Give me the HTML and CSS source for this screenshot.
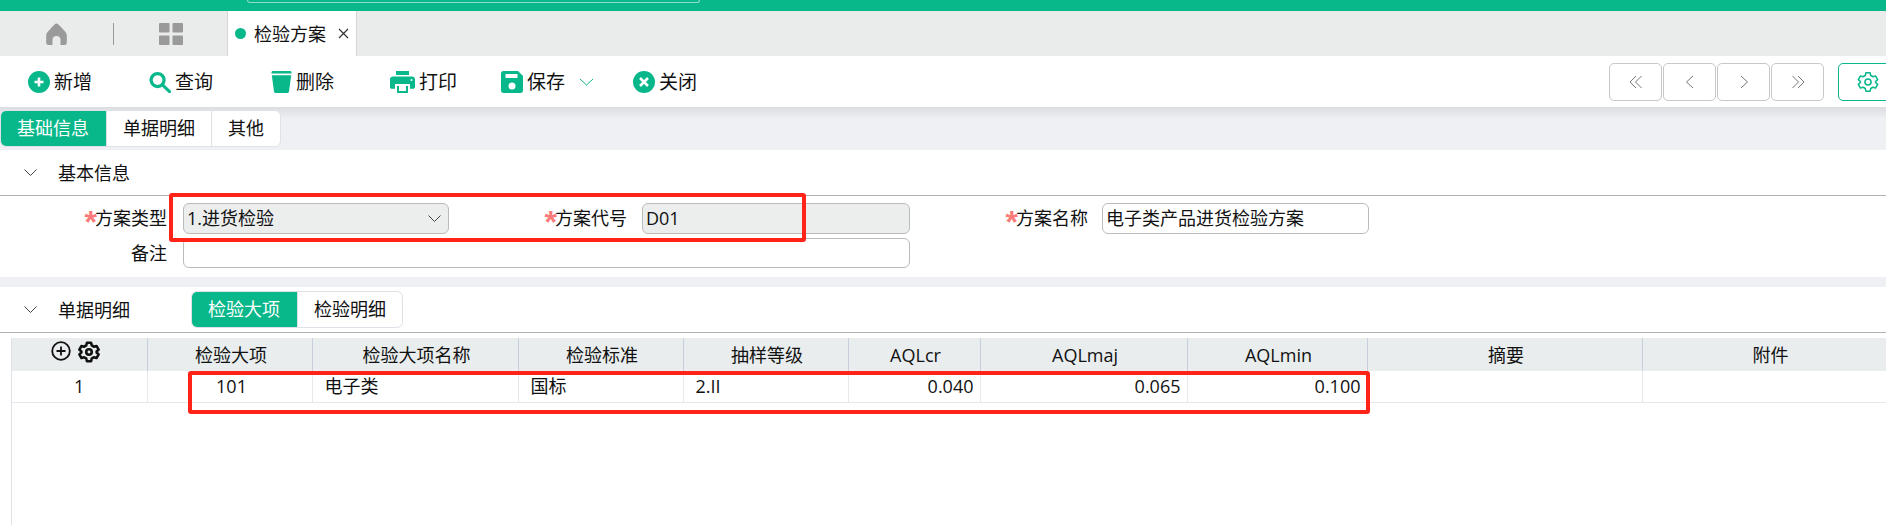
FILE: index.html
```html
<!DOCTYPE html>
<html lang="zh-CN">
<head>
  <meta charset="UTF-8">
  <title>检验方案</title>
  <link rel="stylesheet" href="styles.css">
</head>
<body>
  <div class="page">
    <div class="top-bar"><div class="top-search"></div></div>

    <div class="tab-bar">
      <div class="tab-icon">
        <svg width="21" height="22" viewBox="0 0 21 22"><path fill="#9a9a9a" d="M10.500 0.500C12 0.500 13 2 14.500 3.500L19 8.500C20.300 10 20.800 11 20.800 12.500V19.500C20.800 21 20 22 18.500 22H14.500V16.500C14.500 14.500 12.800 13 10.500 13C8.200 13 6.500 14.500 6.500 16.500V22H2.500C1 22 0.200 21 0.200 19.500V12.500C0.200 11 0.700 10 2 8.500L6.500 3.500C8 2 9 0.500 10.500 0.500Z"/></svg>
      </div>
      <div class="tab-sep"></div>
      <div class="tab-icon">
        <svg width="24" height="22" viewBox="0 0 24 22"><rect width="10.500" height="9.500" rx="1" fill="#9a9a9a"/><rect x="13.500" width="10.500" height="9.500" rx="1" fill="#9a9a9a"/><rect y="12.500" width="10.500" height="9.500" rx="1" fill="#9a9a9a"/><rect x="13.500" y="12.500" width="10.500" height="9.500" rx="1" fill="#9a9a9a"/></svg>
      </div>
      <div class="tab">
        <span class="tab-dot"></span>
        <span class="tab-title">检验方案</span>
        <svg class="tab-close" width="11" height="11" viewBox="0 0 11 11"><path d="M1 1L10 10M10 1L1 10" stroke="#333" stroke-width="1.200" fill="none"/></svg>
      </div>
    </div>

    <div class="toolbar">
      <div class="tools">
        <div class="tool">
          <svg width="22" height="22" viewBox="0 0 22 22"><circle cx="11" cy="11" r="11" fill="#08b78a"/><path d="M11 6.500V15.500M6.500 11H15.500" stroke="#fff" stroke-width="2.600"/></svg>
          <span>新增</span>
        </div>
        <div class="tool">
          <svg width="22" height="22" viewBox="0 0 23 22"><circle cx="9" cy="9" r="6.800" fill="none" stroke="#08b78a" stroke-width="3.400"/><path d="M13.800 13.800L21.500 21" stroke="#08b78a" stroke-width="3.200" stroke-linecap="round"/></svg>
          <span>查询</span>
        </div>
        <div class="tool">
          <svg width="21" height="22" viewBox="0 0 21 22"><path fill="#08b78a" d="M2 0H19C19.800 0 20.500 .6 20.500 1.300V2.500H.5V1.300C.5 .6 1.200 0 2 0ZM0.800 4.200H20.200L18 20.500C17.900 21.400 17.200 22 16.300 22H4.700C3.800 22 3.100 21.400 3 20.500Z"/></svg>
          <span>删除</span>
        </div>
        <div class="tool">
          <svg width="25" height="22" viewBox="0 0 25 22"><path fill="#08b78a" d="M6 0H19V4H6ZM3 5.500H22C23.700 5.500 25 6.800 25 8.500V16C25 17 24.200 17.800 23.200 17.800H20V13H5V17.800H1.800C.8 17.800 0 17 0 16V8.500C0 6.800 1.300 5.500 3 5.500ZM7 15H18V22H7Z"/><rect x="9" y="15" width="7" height="5" fill="#fff"/><circle cx="21.500" cy="9" r="1" fill="#fff"/></svg>
          <span>打印</span>
        </div>
        <div class="tool">
          <svg width="22" height="22" viewBox="0 0 22 22"><path fill="#08b78a" d="M2.500 0H17L22 5V19.500C22 20.900 20.900 22 19.500 22H2.500C1.100 22 0 20.900 0 19.500V2.500C0 1.100 1.100 0 2.500 0Z"/><rect x="4.500" y="3" width="12" height="4" fill="#fff"/><circle cx="11" cy="15" r="3.500" fill="#fff"/></svg>
          <span>保存</span>
          <svg class="tool-arrow" width="15" height="8" viewBox="0 0 15 8"><path d="M1 1L7.500 7L14 1" fill="none" stroke="#08b78a" stroke-width="1"/></svg>
        </div>
        <div class="tool">
          <svg width="22" height="22" viewBox="0 0 22 22"><circle cx="11" cy="11" r="11" fill="#08b78a"/><path d="M7 7L15 15M15 7L7 15" stroke="#fff" stroke-width="2.600"/></svg>
          <span>关闭</span>
        </div>
      </div>
      <div class="pager">
        <div class="pager-btn"><svg width="14" height="14" viewBox="0 0 14 14"><path d="M7 1L1 7L7 13M12.500 1L6.500 7L12.500 13" fill="none" stroke="#777" stroke-width="1"/></svg></div>
        <div class="pager-btn"><svg width="14" height="14" viewBox="0 0 14 14"><path d="M10 1L3.500 7L10 13" fill="none" stroke="#777" stroke-width="1"/></svg></div>
        <div class="pager-btn"><svg width="14" height="14" viewBox="0 0 14 14"><path d="M4 1L10.500 7L4 13" fill="none" stroke="#777" stroke-width="1"/></svg></div>
        <div class="pager-btn"><svg width="14" height="14" viewBox="0 0 14 14"><path d="M1.500 1L7.500 7L1.500 13M7 1L13 7L7 13" fill="none" stroke="#777" stroke-width="1"/></svg></div>
      </div>
      <div class="setting-btn">
        <svg width="22" height="22" viewBox="0 0 24 24" fill="none" stroke="#08b78a" stroke-width="1.700" stroke-linejoin="round"><path d="M9.700 2H14.300L15 5A7.500 7.500 0 0 1 17.300 6.300L20.200 5.400L22.500 9.400L20.300 11.500A7.500 7.500 0 0 1 20.300 12.500L22.500 14.600L20.200 18.600L17.300 17.700A7.500 7.500 0 0 1 15 19L14.300 22H9.700L9 19A7.500 7.500 0 0 1 6.700 17.700L3.800 18.600L1.500 14.600L3.700 12.500A7.500 7.500 0 0 1 3.700 11.500L1.500 9.400L3.800 5.400L6.700 6.300A7.500 7.500 0 0 1 9 5Z"/><circle cx="12" cy="12" r="3.300"/></svg>
      </div>
    </div>

    <div class="tabs-band">
      <div class="seg">
        <div class="seg-item active">基础信息</div>
        <div class="seg-item">单据明细</div>
        <div class="seg-item">其他</div>
      </div>
    </div>

    <div class="section">
      <div class="section-head">
        <svg class="fold" width="13" height="7" viewBox="0 0 13 7"><path d="M.5 .5L6.500 6.500L12.500 .5" fill="none" stroke="#444" stroke-width="1"/></svg>
        <span class="section-title">基本信息</span>
      </div>
      <div class="form">
        <div class="label"><i>*</i>方案类型</div>
        <div class="field select gray">
          <span>1.进货检验</span>
          <svg width="13" height="7" viewBox="0 0 13 7"><path d="M.5 .5L6.500 6.500L12.500 .5" fill="none" stroke="#444" stroke-width="1"/></svg>
        </div>
        <div class="label label-code"><i>*</i>方案代号</div>
        <div class="field gray">D01</div>
        <div class="label label-name"><i>*</i>方案名称</div>
        <div class="field">电子类产品进货检验方案</div>
        <div class="label">备注</div>
        <div class="field wide"></div>
      </div>
    </div>

    <div class="section lower">
      <div class="section-head">
        <svg class="fold" width="13" height="7" viewBox="0 0 13 7"><path d="M.5 .5L6.500 6.500L12.500 .5" fill="none" stroke="#444" stroke-width="1"/></svg>
        <span class="section-title">单据明细</span>
        <div class="seg seg-inner">
          <div class="seg-item active">检验大项</div>
          <div class="seg-item">检验明细</div>
        </div>
      </div>
      <div class="grid-wrap">
        <table class="grid">
          <colgroup>
            <col class="c0"><col class="c1"><col class="c2"><col class="c3"><col class="c4">
            <col class="c5"><col class="c6"><col class="c7"><col class="c8"><col class="c9">
          </colgroup>
          <thead>
            <tr>
              <th class="ops">
                <div class="ops-icons">
                  <svg width="20" height="20" viewBox="0 0 20 20"><circle cx="10" cy="10" r="8.800" fill="none" stroke="#111" stroke-width="1.800"/><path d="M10 5.500V14.500M5.500 10H14.500" stroke="#111" stroke-width="1.800"/></svg>
                  <svg width="22" height="22" viewBox="0 0 24 24" fill="none" stroke="#111" stroke-width="2.800" stroke-linejoin="round"><path d="M9.700 2H14.300L15 5A7.500 7.500 0 0 1 17.300 6.300L20.200 5.400L22.500 9.400L20.300 11.500A7.500 7.500 0 0 1 20.300 12.500L22.500 14.600L20.200 18.600L17.300 17.700A7.500 7.500 0 0 1 15 19L14.300 22H9.700L9 19A7.500 7.500 0 0 1 6.700 17.700L3.800 18.600L1.500 14.600L3.700 12.500A7.500 7.500 0 0 1 3.700 11.500L1.500 9.400L3.800 5.400L6.700 6.300A7.500 7.500 0 0 1 9 5Z"/><circle cx="12" cy="12" r="3"/></svg>
                </div>
              </th>
              <th>检验大项</th>
              <th>检验大项名称</th>
              <th>检验标准</th>
              <th>抽样等级</th>
              <th>AQLcr</th>
              <th>AQLmaj</th>
              <th>AQLmin</th>
              <th>摘要</th>
              <th>附件</th>
            </tr>
          </thead>
          <tbody>
            <tr>
              <td class="mid">1</td>
              <td class="mid code">101</td>
              <td>电子类</td>
              <td>国标</td>
              <td>2.II</td>
              <td class="num">0.040</td>
              <td class="num">0.065</td>
              <td class="num">0.100</td>
              <td></td>
              <td></td>
            </tr>
          </tbody>
        </table>
      </div>
    </div>

    <!-- red marks drawn over the screenshot -->
    <div class="mark mark-form"></div>
    <div class="mark mark-row"></div>
  </div>
</body>
</html>
```

FILE: styles.css
```css
html, body {
  margin: 0;
  padding: 0;
  height: 100%;
}
body {
  font-family: "Open Sans", "Noto Sans CJK SC", sans-serif;
  font-size: 18px;
  color: #111;
  background: #fff;
  overflow: hidden;
}
.page {
  position: relative;
  height: 525px;
  overflow: hidden;
}

/* top */
.top-bar {
  height: 11px;
  background: #08b78a;
}
.top-search {
  width: 451px;
  height: 2px;
  margin-left: 247px;
  border: 1px solid #8fdcc6;
  border-top: none;
  border-radius: 0 0 6px 6px;
}
.tab-bar {
  height: 45px;
  background: #e9eceb;
  display: flex;
  align-items: center;
}
.tab-icon {
  width: 113px;
  display: flex;
  justify-content: center;
}
.tab-sep {
  width: 1px;
  height: 22px;
  background: #9a9a9a;
}
.tab {
  width: 130px;
  height: 45px;
  box-sizing: border-box;
  background: #fff;
  border-left: 1px solid #d5d5d5;
  border-right: 1px solid #d5d5d5;
  display: flex;
  align-items: center;
  padding-left: 7px;
}
.tab-dot {
  width: 11px;
  height: 11px;
  border-radius: 50%;
  background: #08b78a;
  margin-right: 8px;
}
.tab-title {
  line-height: 24px;
}
.tab-close {
  margin-left: 12px;
}

/* toolbar */
.toolbar {
  height: 51px;
  background: #fff;
  display: flex;
  align-items: center;
  padding-left: 28px;
  overflow: hidden;
}
.tools {
  display: grid;
  grid-template-columns: 121px 122px 119px 111px 132px auto;
}
.tool {
  display: flex;
  align-items: center;
  gap: 4px;
  font-size: 19px;
  line-height: 24px;
}
.tool-arrow {
  margin-left: 10px;
}
.pager {
  margin-left: auto;
  display: flex;
  gap: 1px;
}
.pager-btn {
  width: 53px;
  height: 38px;
  box-sizing: border-box;
  border: 1px solid #c8c8c8;
  border-radius: 5px;
  display: flex;
  align-items: center;
  justify-content: center;
}
.setting-btn {
  flex: none;
  width: 60px;
  height: 38px;
  margin: 0 -12px 0 14px;
  box-sizing: border-box;
  border: 1px solid #08b78a;
  border-radius: 5px;
  display: flex;
  align-items: center;
  padding-left: 18px;
}

/* segmented tabs */
.tabs-band {
  height: 43px;
  box-sizing: border-box;
  padding-top: 3px;
  background: linear-gradient(#dcdde1, #eff0f4 12px);
}
.seg {
  display: inline-flex;
  height: 37px;
  box-sizing: border-box;
  background: #fff;
  border: 1px solid #dfe1e8;
  border-radius: 6px;
  overflow: hidden;
}
.seg-item {
  padding: 0 16px;
  line-height: 35px;
  border-left: 1px solid #dfe1e8;
}
.seg-item.active {
  margin: -1px 0 -1px -1px;
  padding: 1px 17px;
  border-left: none;
  background: #08b78a;
  color: #fff;
}

/* sections */
.section {
  background: #fff;
}
.section.lower {
  border-top: 10px solid #eff0f4;
}
.section-head {
  height: 46px;
  box-sizing: border-box;
  border-bottom: 1px solid #b2b2b2;
  display: flex;
  align-items: center;
  padding-left: 24px;
}
.fold {
  margin-right: 21px;
}
.section-title {
  line-height: 24px;
}
.seg-inner {
  margin-left: 61px;
}
.form {
  display: grid;
  grid-template-columns: 183px 266px 193px 268px 192px 267px;
  row-gap: 4px;
  padding: 7px 0 9px;
}
.label {
  text-align: right;
  padding-right: 16px;
  line-height: 31px;
  height: 30px;
}
.label-code {
  padding-right: 15px;
}
.label-name {
  padding-right: 14px;
}
.label i {
  font-family: "Liberation Sans", sans-serif;
  font-size: 32px;
  font-weight: bold;
  font-style: normal;
  line-height: 0;
  color: #fb7a7a;
  vertical-align: -8px;
  margin-right: -2px;
}
.field {
  height: 31px;
  line-height: 29px;
  box-sizing: border-box;
  border: 1px solid #bbb;
  border-radius: 6px;
  padding: 0 3px;
  background: #fff;
}
.field.gray {
  background: #eceeed;
}
.field.select {
  display: flex;
  justify-content: space-between;
  align-items: center;
  padding-right: 7px;
}
.field.wide {
  grid-column: 2 / 5;
  height: 30px;
}

/* table */
.grid-wrap {
  margin: 5px 0 0 11px;
  height: 193px;
  border-left: 1px solid #dfe2e8;
}
.grid {
  width: 1884px;
  table-layout: fixed;
  border-collapse: collapse;
}
.c0 { width: 135px; }
.c1 { width: 165px; }
.c2 { width: 206px; }
.c3 { width: 165px; }
.c4 { width: 165px; }
.c5 { width: 132px; }
.c6 { width: 207px; }
.c7 { width: 180px; }
.c8 { width: 275px; }
.c9 { width: 254px; }
.grid th {
  height: 33px;
  box-sizing: border-box;
  padding: 0 0 0 3px;
  background: #e9eded;
  font-weight: normal;
  line-height: 24px;
  border-right: 1px solid #c8cedb;
}
.grid th.ops {
  vertical-align: top;
  padding: 3px 7px 0 0;
}
.ops-icons {
  display: flex;
  justify-content: center;
  gap: 7px;
}
.grid td {
  height: 31px;
  padding: 0 12px;
  line-height: 24px;
  border-right: 1px solid #e6e8ec;
  border-bottom: 1px solid #e6e8ec;
  box-sizing: border-box;
}
.grid td.mid {
  text-align: center;
}
.grid td.code {
  padding-left: 16px;
}
.grid td.num {
  text-align: right;
  padding-right: 6px;
}

/* annotations */
.mark {
  position: absolute;
  box-sizing: border-box;
  border: 4px solid #ff2318;
  border-radius: 3px;
}
.mark-form {
  left: 169px;
  top: 193px;
  width: 637px;
  height: 49px;
}
.mark-row {
  left: 188px;
  top: 371px;
  width: 1182px;
  height: 43px;
}
```
